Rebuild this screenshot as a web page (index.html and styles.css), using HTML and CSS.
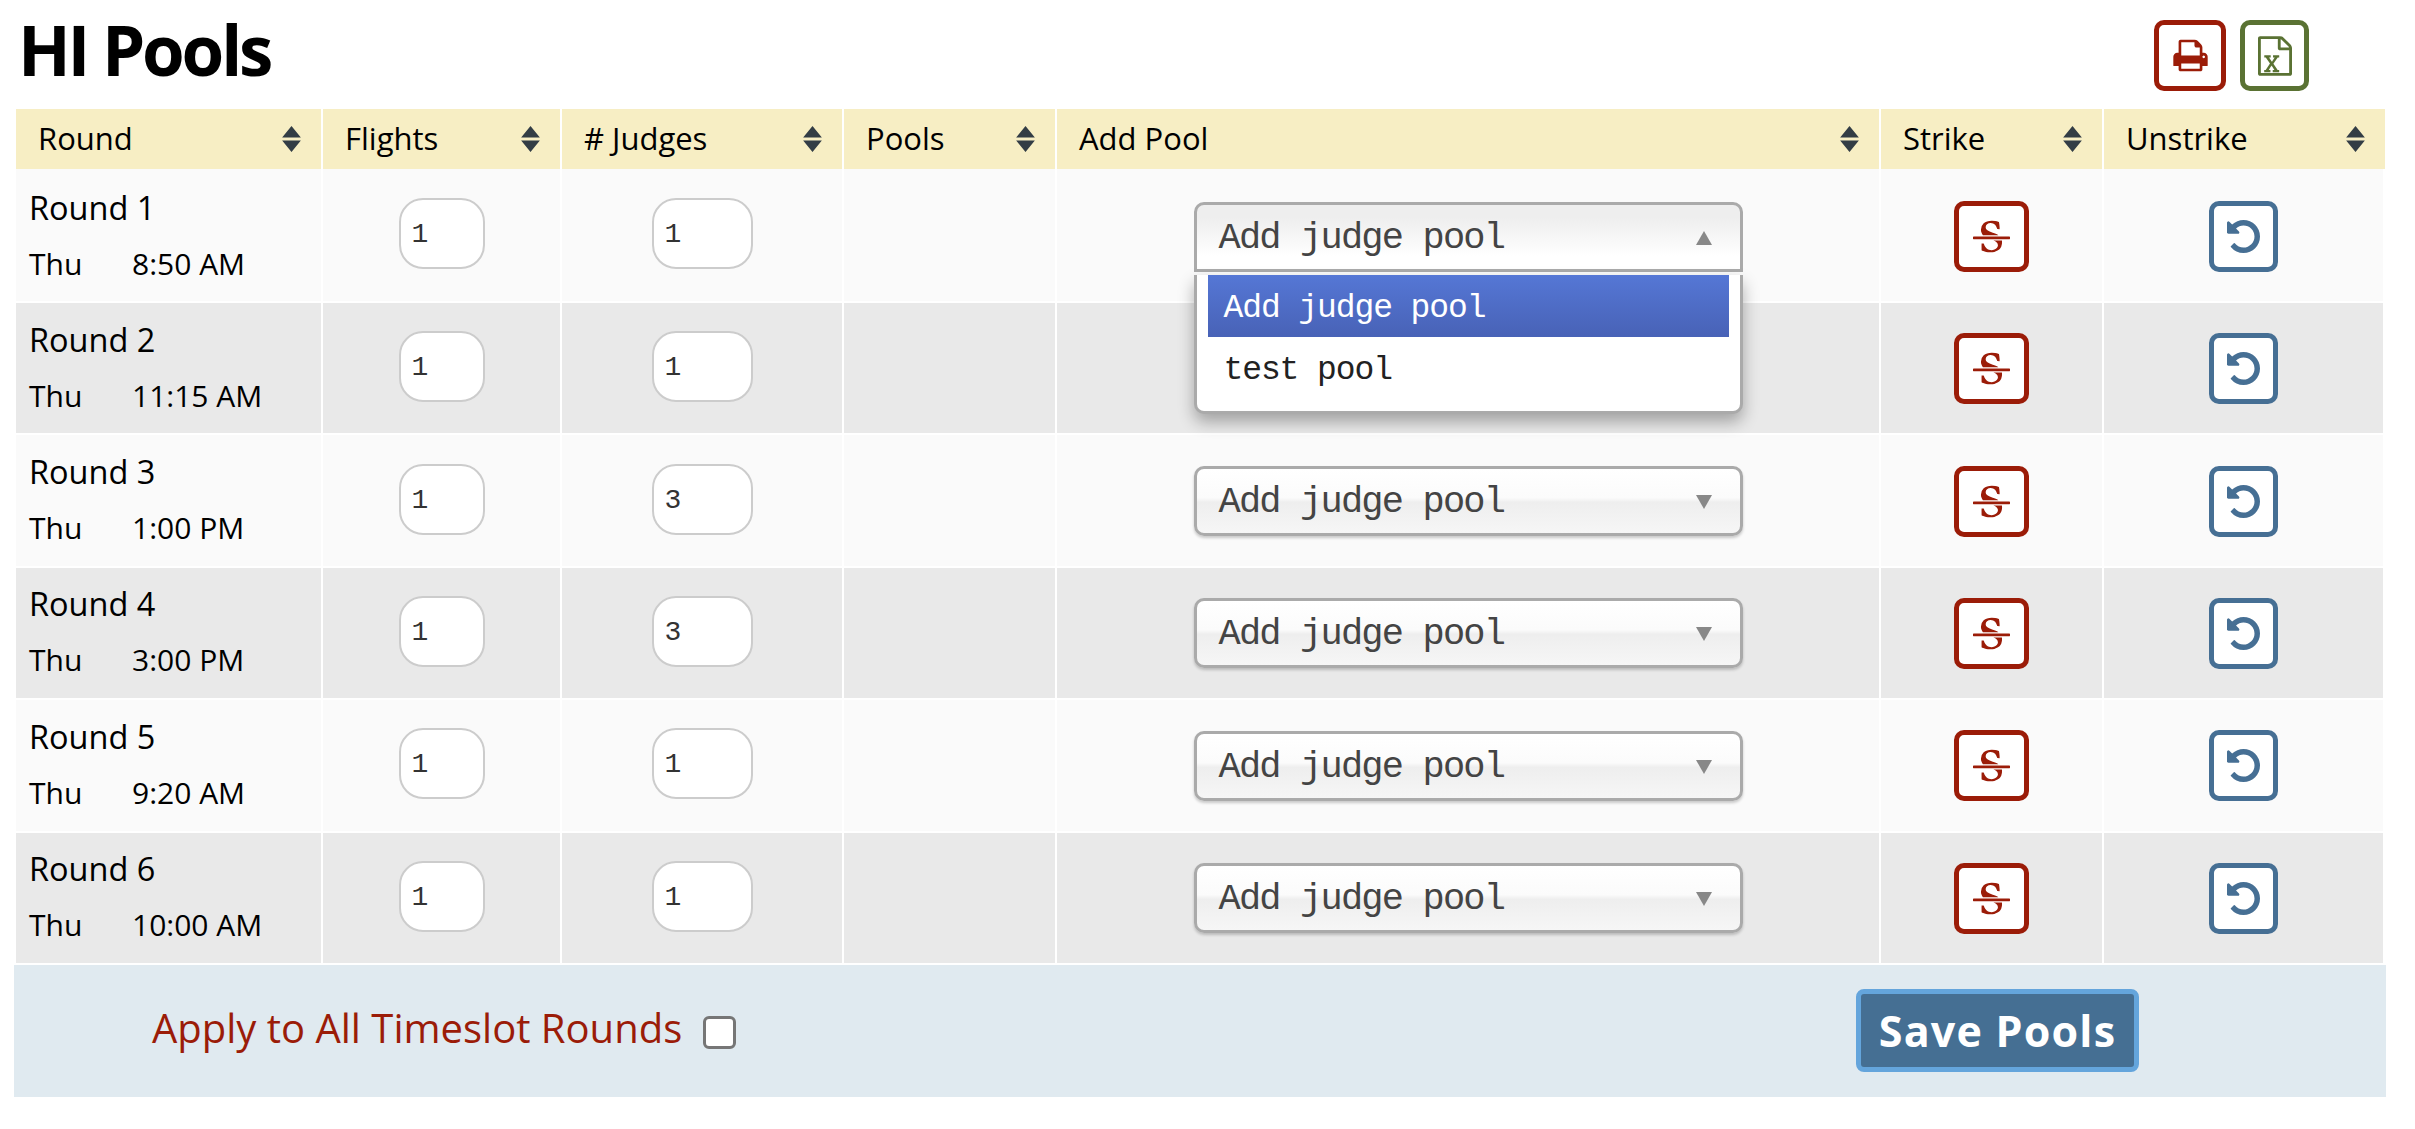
FILE: index.html
```html
<!DOCTYPE html>
<html lang="en">

<head>
  <meta charset="UTF-8">
  <title>HI Pools</title>
  <link rel="stylesheet" href="styles.css">
</head>

<body>
  <svg class="icon-defs" aria-hidden="true">
    <symbol id="i-sort" viewBox="0 0 20 25">
      <path d="M10 0l9 11H1zM1 14h18l-9 11z" />
    </symbol>
    <symbol id="i-print" viewBox="0 0 1792 1792">
      <path d="M448 1536h896v-256h-896v256zm0-640h896v-384h-160q-40 0-68-28t-28-68v-160h-640v640zm1152 64q0-26-19-45t-45-19-45 19-19 45 19 45 45 19 45-19 19-45zm128 0v416q0 13-9.5 22.5t-22.5 9.5h-224v160q0 40-28 68t-68 28h-960q-40 0-68-28t-28-68v-160h-224q-13 0-22.5-9.5t-9.5-22.5v-416q0-79 56.5-135.5t135.5-56.5h64v-544q0-40 28-68t68-28h672q40 0 88 20t76 48l152 152q28 28 48 76t20 88v256h64q79 0 135.5 56.5t56.5 135.5z" />
    </symbol>
    <symbol id="i-excel" viewBox="0 0 1536 1792">
      <path d="M1468 380q28 28 48 76t20 88v1152q0 40-28 68t-68 28h-1344q-40 0-68-28t-28-68v-1600q0-40 28-68t68-28h896q40 0 88 20t76 48zm-444-244v376h376q-10-29-22-41l-313-313q-12-12-41-22zm384 1528v-1024h-416q-40 0-68-28t-28-68v-416h-768v1536h1280zm-1128-141v106h281v-106h-75l103-161q5-7 10-16.5t7.5-13.5 3.5-4h2q1 4 5 10 2 4 4.5 7.5t6 8 6.5 8.5l107 161h-76v106h291v-106h-68l-192-273 195-282h67v-107h-279v107h74l-103 159q-4 7-10 16.5t-9.5 13.5-2.5 3h-2q-1-4-5-10-6-11-17-23l-106-159h76v-107h-290v107h68l189 272-194 283h-68z" />
    </symbol>
    <symbol id="i-strike" viewBox="0 0 1792 1792">
      <path d="M1760 896q14 0 23 9t9 23v64q0 14-9 23t-23 9h-1728q-14 0-23-9t-9-23v-64q0-14 9-23t23-9h1728zm-1277-64q-28-35-51-80-48-98-48-188 0-181 134-309 133-127 393-127 50 0 167 19 66 12 177 48 10 38 21 118 14 123 14 183 0 18-5 45l-12 3-84-6-14-2q-50-149-103-205-88-91-210-91-114 0-182 59-67 58-67 146 0 73 66 140t279 129q69 20 173 66 58 28 95 52h-743zm507 256h411q7 39 7 92 0 111-41 212-23 56-71 104-37 35-109 81-80 48-153 66-80 21-203 21-114 0-195-23l-140-40q-57-16-72-28-8-8-8-22v-13q0-108-2-156-1-30 0-68l2-37v-44l102-2q15 34 30 71t22.5 56 12.5 27q35 57 80 94 43 36 105 57 59 22 132 22 64 0 139-27 77-26 122-86 47-61 47-129 0-84-81-157-34-29-137-71z" />
    </symbol>
    <symbol id="i-undo" viewBox="0 0 1536 1536">
      <path d="M1536 768q0 156-61 298t-164 245-245 164-298 61q-172 0-327-72.5t-264-204.5q-7-10-6.5-22.5t8.5-20.5l137-138q10-9 25-9 16 2 23 12 73 95 179 147t225 52q104 0 198.5-40.5t163.5-109.5 109.5-163.5 40.5-198.5-40.5-198.5-109.5-163.5-163.5-109.5-198.5-40.5q-98 0-188 35.5t-160 101.5l137 138q31 30 14 69-17 40-59 40h-448q-26 0-45-19t-19-45v-448q0-42 40-59 39-17 69 14l130 129q107-101 244.5-156.5t284.5-55.5q156 0 298 61t245 164 164 245 61 298z" />
    </symbol>
  </svg>

  <div class="page">
    <div class="title-row">
      <h1>HI Pools</h1>
      <div class="tools">
        <button class="icon-btn red wide"><svg class="ico"><use href="#i-print" /></svg></button>
        <button class="icon-btn green"><svg class="ico ico-file"><use href="#i-excel" /></svg></button>
      </div>
    </div>

    <table class="pools">
      <colgroup>
        <col class="c-round">
        <col class="c-flights">
        <col class="c-judges">
        <col class="c-pools">
        <col class="c-add">
        <col class="c-strike">
        <col class="c-unstrike">
      </colgroup>
      <thead>
        <tr>
          <th><div class="th-in">Round <svg class="sort"><use href="#i-sort" /></svg></div></th>
          <th><div class="th-in">Flights <svg class="sort"><use href="#i-sort" /></svg></div></th>
          <th><div class="th-in"># Judges <svg class="sort"><use href="#i-sort" /></svg></div></th>
          <th><div class="th-in">Pools <svg class="sort"><use href="#i-sort" /></svg></div></th>
          <th><div class="th-in">Add Pool <svg class="sort"><use href="#i-sort" /></svg></div></th>
          <th><div class="th-in">Strike <svg class="sort"><use href="#i-sort" /></svg></div></th>
          <th><div class="th-in">Unstrike <svg class="sort"><use href="#i-sort" /></svg></div></th>
        </tr>
      </thead>
      <tbody>
        <tr>
          <td class="round"><div class="name">Round 1</div><div class="when"><span class="day">Thu</span>8:50 AM</div></td>
          <td class="mid"><input class="num flights" value="1"></td>
          <td class="mid"><input class="num judges" value="1"></td>
          <td></td>
          <td class="mid low">
            <div class="picker open">
              <div class="picker-box"><span>Add judge pool</span><i class="caret up"></i></div>
              <ul class="picker-menu">
                <li class="active">Add judge pool</li>
                <li>test pool</li>
              </ul>
            </div>
          </td>
          <td class="mid low"><button class="icon-btn red strike"><svg class="ico"><use href="#i-strike" /></svg></button></td>
          <td class="mid low"><button class="icon-btn blue"><svg class="ico ico-undo"><use href="#i-undo" /></svg></button></td>
        </tr>
        <tr>
          <td class="round"><div class="name">Round 2</div><div class="when"><span class="day">Thu</span>11:15 AM</div></td>
          <td class="mid"><input class="num flights" value="1"></td>
          <td class="mid"><input class="num judges" value="1"></td>
          <td></td>
          <td class="mid low"></td>
          <td class="mid low"><button class="icon-btn red strike"><svg class="ico"><use href="#i-strike" /></svg></button></td>
          <td class="mid low"><button class="icon-btn blue"><svg class="ico ico-undo"><use href="#i-undo" /></svg></button></td>
        </tr>
        <tr>
          <td class="round"><div class="name">Round 3</div><div class="when"><span class="day">Thu</span>1:00 PM</div></td>
          <td class="mid"><input class="num flights" value="1"></td>
          <td class="mid"><input class="num judges" value="3"></td>
          <td></td>
          <td class="mid low"><div class="picker"><div class="picker-box"><span>Add judge pool</span><i class="caret"></i></div></div></td>
          <td class="mid low"><button class="icon-btn red strike"><svg class="ico"><use href="#i-strike" /></svg></button></td>
          <td class="mid low"><button class="icon-btn blue"><svg class="ico ico-undo"><use href="#i-undo" /></svg></button></td>
        </tr>
        <tr>
          <td class="round"><div class="name">Round 4</div><div class="when"><span class="day">Thu</span>3:00 PM</div></td>
          <td class="mid"><input class="num flights" value="1"></td>
          <td class="mid"><input class="num judges" value="3"></td>
          <td></td>
          <td class="mid low"><div class="picker"><div class="picker-box"><span>Add judge pool</span><i class="caret"></i></div></div></td>
          <td class="mid low"><button class="icon-btn red strike"><svg class="ico"><use href="#i-strike" /></svg></button></td>
          <td class="mid low"><button class="icon-btn blue"><svg class="ico ico-undo"><use href="#i-undo" /></svg></button></td>
        </tr>
        <tr>
          <td class="round"><div class="name">Round 5</div><div class="when"><span class="day">Thu</span>9:20 AM</div></td>
          <td class="mid"><input class="num flights" value="1"></td>
          <td class="mid"><input class="num judges" value="1"></td>
          <td></td>
          <td class="mid low"><div class="picker"><div class="picker-box"><span>Add judge pool</span><i class="caret"></i></div></div></td>
          <td class="mid low"><button class="icon-btn red strike"><svg class="ico"><use href="#i-strike" /></svg></button></td>
          <td class="mid low"><button class="icon-btn blue"><svg class="ico ico-undo"><use href="#i-undo" /></svg></button></td>
        </tr>
        <tr>
          <td class="round"><div class="name">Round 6</div><div class="when"><span class="day">Thu</span>10:00 AM</div></td>
          <td class="mid"><input class="num flights" value="1"></td>
          <td class="mid"><input class="num judges" value="1"></td>
          <td></td>
          <td class="mid low"><div class="picker"><div class="picker-box"><span>Add judge pool</span><i class="caret"></i></div></div></td>
          <td class="mid low"><button class="icon-btn red strike"><svg class="ico"><use href="#i-strike" /></svg></button></td>
          <td class="mid low"><button class="icon-btn blue"><svg class="ico ico-undo"><use href="#i-undo" /></svg></button></td>
        </tr>
      </tbody>
    </table>

    <div class="save-bar">
      <label class="apply">Apply to All Timeslot Rounds</label>
      <input class="apply-check" type="checkbox">
      <button class="save">Save Pools</button>
    </div>
  </div>
</body>

</html>
```

FILE: styles.css
```css
* {
  box-sizing: border-box;
}

body {
  margin: 0;
  background: #fff;
  color: #000;
  font-family: "Open Sans", sans-serif;
}

.icon-defs {
  display: none;
}

.page {
  width: 2372px;
  margin-left: 14px;
}

/* title row */
.title-row {
  display: flex;
  justify-content: space-between;
  height: 109px;
  padding: 20px 77px 0 4px;
}

h1 {
  margin: -15px 0 0;
  font-size: 69px;
  line-height: 88px;
  font-weight: 700;
  letter-spacing: -3.2px;
}

.tools {
  display: flex;
  gap: 14px;
  height: 71px;
}

.icon-btn {
  display: inline-flex;
  align-items: center;
  justify-content: center;
  width: 69px;
  height: 71px;
  padding: 0;
  background: #fff;
  border: 5px solid #000;
  border-radius: 10px;
  vertical-align: middle;
}

.icon-btn.wide {
  width: 72px;
}

.icon-btn.strike {
  width: 75px;
}

.icon-btn.red {
  border-color: #9b1c08;
  color: #9b1c08;
}

.icon-btn.green {
  border-color: #5a7233;
  color: #5a7233;
}

.icon-btn.blue {
  border-color: #466f94;
  color: #466f94;
}

.ico {
  width: 37px;
  height: 37px;
  fill: currentColor;
}

.ico-file {
  width: 34px;
  height: 40px;
}

.ico-undo {
  width: 33px;
  height: 33px;
}

/* table */
.pools {
  width: 2369px;
  margin-left: 2px;
  border-collapse: separate;
  border-spacing: 0;
  table-layout: fixed;
}

.c-round { width: 307px; }
.c-flights { width: 239px; }
.c-judges { width: 282px; }
.c-pools { width: 213px; }
.c-add { width: 824px; }
.c-strike { width: 223px; }
.c-unstrike { width: 281px; }

th {
  height: 60px;
  padding: 0;
  background: #f7eec4;
  border-right: 2px solid #fff;
  font-size: 31px;
  font-weight: 500;
  text-align: left;
}

th:last-child {
  border-right: 0;
}

.th-in {
  display: flex;
  align-items: center;
  justify-content: space-between;
  margin-top: -2px;
  padding: 0 19px 0 22px;
}

.sort {
  flex: none;
  width: 21px;
  height: 26px;
  margin-top: 2px;
  fill: #333d45;
}

td {
  height: 132.4px;
  padding: 0;
  border-right: 2px solid #fff;
  border-bottom: 2px solid #fff;
  vertical-align: middle;
}

tbody tr:first-child td {
  height: 134px;
}

tbody tr:nth-child(odd) td {
  background: #fafafa;
}

tbody tr:nth-child(even) td {
  background: #e9e9e9;
}

.mid {
  padding-bottom: 3px;
  text-align: center;
}

.low {
  padding: 1px 0 0;
}

tbody tr:first-child .low {
  padding-top: 3px;
}

.round {
  padding: 0 0 1px 13px;
  white-space: nowrap;
}

tbody tr:first-child .round {
  padding: 2px 0 0 13px;
}

.name {
  font-size: 32.5px;
  line-height: 44px;
}

.when {
  margin-top: 12px;
  font-size: 30px;
  line-height: 44px;
}

.day {
  display: inline-block;
  width: 103px;
}

.num {
  height: 71px;
  padding: 2px 0 0 11px;
  background: #fff;
  border: 2px solid #ccc;
  border-radius: 24px;
  color: #333;
  font-family: "Liberation Mono", monospace;
  font-size: 28px;
  vertical-align: middle;
}

.num.flights {
  width: 86px;
}

.num.judges {
  width: 101px;
}

/* judge pool picker */
.picker {
  position: relative;
  width: 549px;
  margin: 0 auto;
  text-align: left;
}

.picker-box {
  display: flex;
  align-items: center;
  justify-content: space-between;
  height: 70px;
  padding: 2px 28px 0 22px;
  border: 3px solid #aaa;
  border-radius: 10px;
  background: linear-gradient(#fff 0%, #fbfbfb 45%, #eee 52%, #f6f6f6 100%);
  box-shadow: 0 2px 3px rgba(0, 0, 0, 0.2);
  color: #444;
  font-family: "Liberation Mono", monospace;
  font-size: 37px;
  letter-spacing: -1.8px;
}

.open .picker-box {
  border-radius: 10px 10px 0 0;
  background: linear-gradient(#eee 20%, #fff 80%);
  box-shadow: none;
}

.caret {
  border-left: 8px solid transparent;
  border-right: 8px solid transparent;
  border-top: 14px solid #888;
}

.caret.up {
  border-top: 0;
  border-bottom: 14px solid #888;
}

.picker-menu {
  position: absolute;
  top: 73px;
  left: 0;
  z-index: 5;
  width: 100%;
  height: 139px;
  margin: 0;
  padding: 0 11px;
  list-style: none;
  background: #fff;
  border: 3px solid #aaa;
  border-top: 0;
  border-radius: 0 0 10px 10px;
  box-shadow: 0 8px 16px rgba(0, 0, 0, 0.3);
  color: #222;
  font-family: "Liberation Mono", monospace;
  font-size: 33px;
  letter-spacing: -1.1px;
}

.picker-menu li {
  height: 62px;
  padding: 5px 0 0 16px;
  line-height: 57px;
}

.picker-menu .active {
  background: linear-gradient(#5577d5, #4862b6);
  color: #fff;
}

/* save bar */
.save-bar {
  display: flex;
  align-items: center;
  height: 132px;
  padding-left: 138px;
  background: #e0eaf0;
}

.apply {
  margin-top: -6px;
  color: #9b1c08;
  font-size: 40px;
  font-weight: 500;
}

.apply-check {
  width: 33px;
  height: 33px;
  margin: 4px 0 0 21px;
  appearance: none;
  background: #fff;
  border: 3px solid #767676;
  border-radius: 6px;
}

.save {
  width: 283px;
  height: 83px;
  margin-left: auto;
  margin-right: 247px;
  padding: 0;
  background: #456f93;
  border: 5px solid #64a5dc;
  border-radius: 8px;
  color: #fff;
  font-family: "Open Sans", sans-serif;
  font-size: 43px;
  font-weight: 700;
  letter-spacing: 1.2px;
}
```
